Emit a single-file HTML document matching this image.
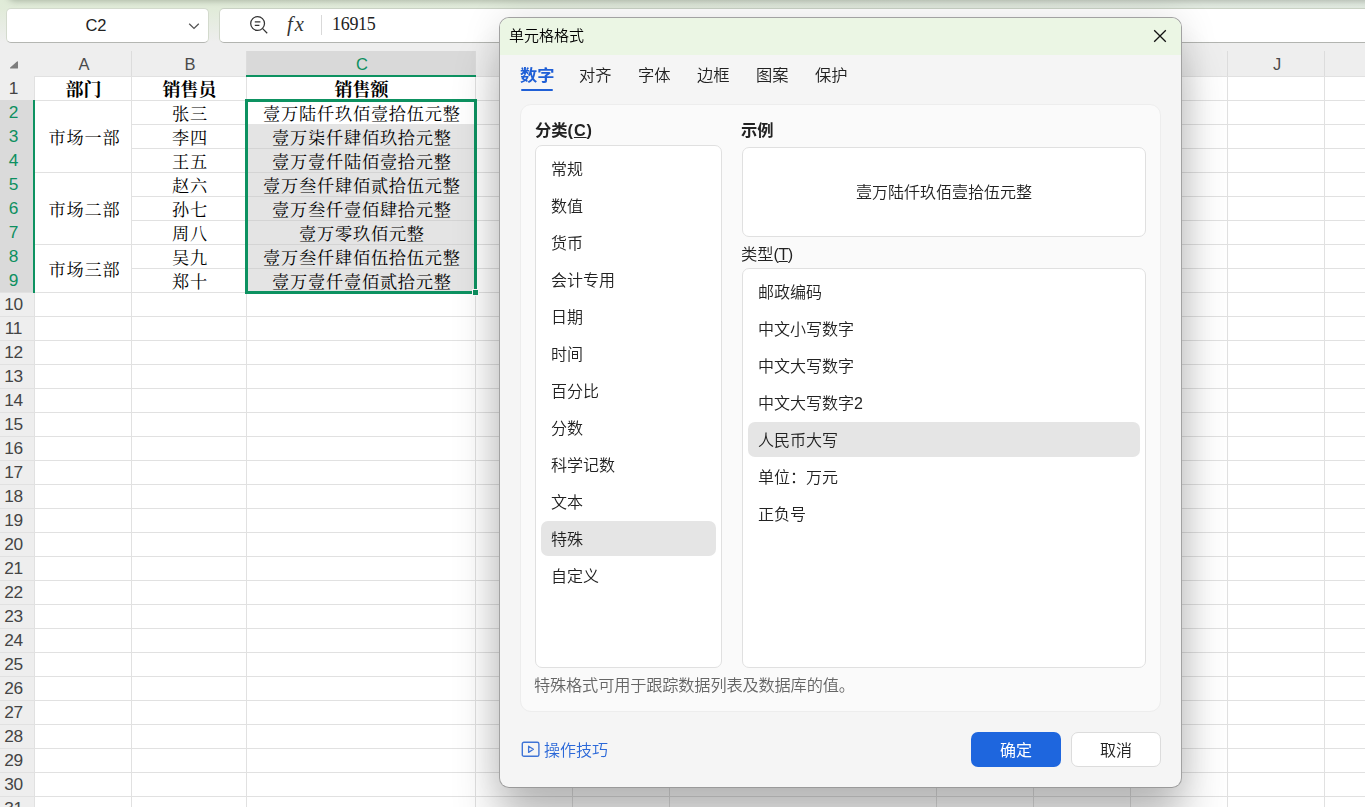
<!DOCTYPE html>
<html lang="zh-CN"><head><meta charset="utf-8"><title>单元格格式</title>
<style>
*{box-sizing:border-box;margin:0;padding:0}
html,body{width:1365px;height:807px;overflow:hidden;background:#fff}
body{position:relative;font-family:"Liberation Sans","Noto Sans CJK SC",sans-serif;color:#222;-webkit-font-smoothing:antialiased}
.abs{position:absolute}
#top{left:0;top:0;width:1365px;height:43px;background:linear-gradient(#e0ebd8 0,#e1ebd9 9px,#eeeeee 42px)}
#top2{left:0;top:0;width:1365px;height:9px;background:linear-gradient(90deg,rgba(224,232,222,0) 0,rgba(224,232,222,0) 15%,rgba(224,232,224,.9) 90%)}
#topshadow{left:9px;top:-12px;width:1400px;height:12px;border-radius:6px;box-shadow:0 0 6px 1px rgba(70,80,66,.36)}
#namebox{left:6px;top:8px;width:203px;height:35px;background:#fff;border:1px solid #d3dacd;border-bottom-color:#b4b6b2;border-radius:5px}
#fbox{left:219px;top:8px;width:1160px;height:35px;background:#fff;border:1px solid #d0d7ca;border-top-color:#c9d1c4;border-bottom-color:#b2b4b0;border-radius:5px}
#nametxt{left:8px;top:9px;width:176px;height:33px;line-height:33px;text-align:center;font-size:16.5px;color:#222}
#fval{left:332px;top:9px;height:31px;line-height:30px;font-family:"Liberation Serif",serif;font-size:18px;letter-spacing:-0.3px;color:#222}
#fsep{left:321px;top:15px;width:1px;height:20px;background:#d9d9d9}
#hdr{left:0;top:43px;width:1365px;height:33px;background:#eeeeee}
#rowhdr{left:0;top:76px;width:34px;height:731px;background:#eeeeee}
.ch{position:absolute;top:51px;height:25px;line-height:26px;text-align:center;padding-left:2px;font-size:16.5px;color:#4a4a4a;border-left:1px solid #dcdcdc}
.rn{z-index:2;position:absolute;left:0;width:27px;height:24px;line-height:25px;text-align:center;font-size:17.3px;letter-spacing:-.3px;color:#444}
.rn.sel{color:#0d8f60}
.hl{position:absolute;left:0;width:1365px;height:1px;background:#e1e1e1}
.vl{position:absolute;top:76px;width:1px;height:731px;background:#e1e1e1}
.cell{position:absolute;text-align:center;padding-left:2px;font-family:"Liberation Serif","Noto Serif CJK SC",serif;font-size:17.2px;letter-spacing:.8px;text-indent:.8px;font-weight:400;color:#000;white-space:nowrap;line-height:24px;height:24px;margin-top:1px}
.cell.b{font-weight:700;font-size:18px;letter-spacing:0;text-indent:0;margin-top:0}
#dlg{will-change:transform;left:499px;top:17px;width:683px;height:771px;background:#f5f5f5;border:1px solid #a2a2a2;border-bottom-color:#9a9a9a;border-radius:10px;box-shadow:0 2px 37px rgba(0,0,0,.125),0 40px 47px rgba(0,0,0,.235);overflow:hidden}
#din{left:0;top:-1px;width:682px;height:771px}
#dtitle{left:-1px;top:0;width:684px;height:38px;background:#ebf6e4}
#dtitletxt{left:9px;top:1px;height:36px;line-height:35px;font-size:15px;font-weight:350;color:#000}
.tab{position:absolute;top:46px;height:24px;line-height:24px;font-size:16.3px;font-weight:350;color:#222;white-space:nowrap}
.tab.on{color:#1f5fd6;font-weight:700;transform:scaleX(1.06);transform-origin:0 50%}
#tabline{left:21px;top:72px;width:32px;height:2px;background:#1f5fd6;border-radius:1px}
#panel{left:20px;top:87px;width:641px;height:608px;background:#fafafa;border:1px solid #ededed;border-radius:11px}
.lbl{position:absolute;font-size:16.3px;font-weight:350;line-height:22px;height:22px;color:#222;white-space:nowrap}
.lbl.b{font-weight:700}
.box{position:absolute;background:#fff;border:1px solid #e0e0e0;border-radius:7px}
.it{position:absolute;left:15px;height:35px;line-height:34px;font-size:16px;font-weight:350;color:#222;white-space:nowrap;margin-top:2px}
.selbg{position:absolute;left:5px;height:35px;background:#e5e5e5;border-radius:7px}
#desc{left:34px;top:657px;font-size:16.2px;letter-spacing:-.15px;font-weight:350;line-height:22px;color:#666;white-space:nowrap}
#tips{left:44px;top:723px;font-size:16px;font-weight:350;line-height:22px;color:#2b68d8;white-space:nowrap}
#ok{left:471px;top:715px;width:90px;height:35px;background:#1e66de;border-radius:7px;color:#fff;text-align:center;font-size:16px;font-weight:400;line-height:37px}
#cancel{left:571px;top:715px;width:90px;height:35px;background:#fff;border:1px solid #dcdcdc;border-radius:7px;color:#222;text-align:center;font-size:16px;font-weight:350;line-height:35px}
</style></head>
<body>
<div class="abs" id="top"></div><div class="abs" id="top2"></div><div class="abs" id="topshadow"></div>
<div class="abs" id="namebox"></div><div class="abs" id="fbox"></div>
<div class="abs" id="nametxt">C2</div>
<svg class="abs" style="left:186px;top:20px" width="16" height="12" viewBox="0 0 16 12"><path d="M3.2 3.8 L8 8.4 L12.8 3.8" fill="none" stroke="#555" stroke-width="1.3"/></svg>
<svg class="abs" style="left:248px;top:14px" width="22" height="22" viewBox="0 0 22 22"><circle cx="9.6" cy="9.5" r="6.9" fill="none" stroke="#333" stroke-width="1.25"/><path d="M14.7 14.6 L19.2 19.2" stroke="#333" stroke-width="1.25" fill="none"/><path d="M6.8 7.8 H12.4 M6.8 11.3 H11.4" stroke="#333" stroke-width="1.2" fill="none"/></svg>
<div class="abs" style="left:287px;top:9px;height:32px;line-height:30px;font-family:'Liberation Serif',serif;font-style:italic;font-size:20.5px;letter-spacing:2px;color:#333">fx</div>
<div class="abs" id="fsep"></div><div class="abs" id="fval">16915</div>
<div class="abs" id="hdr"></div><div class="abs" id="rowhdr"></div>
<div class="abs" style="left:246px;top:51px;width:229px;height:25px;background:#d9d9d9"></div>
<div class="ch" style="left:34px;width:97px;padding-left:3px;border-left:none">A</div>
<div class="ch" style="left:131px;width:115px">B</div>
<div class="ch" style="left:246px;width:229px;color:#0d8f60">C</div>
<div class="ch" style="left:475px;width:97px">D</div>
<div class="ch" style="left:572px;width:97px">E</div>
<div class="ch" style="left:669px;width:267px">F</div>
<div class="ch" style="left:936px;width:97px">G</div>
<div class="ch" style="left:1033px;width:97px">H</div>
<div class="ch" style="left:1130px;width:97px">I</div>
<div class="ch" style="left:1227px;width:97px">J</div>
<div class="ch" style="left:1324px;width:98px">K</div>
<svg class="abs" style="left:8px;top:59px" width="12" height="12" viewBox="0 0 12 12"><path d="M9.4 2.9 V9 H2.6 Z" fill="#7d7d7d" stroke="#7d7d7d" stroke-width="1.2" stroke-linejoin="round"/></svg>
<div class="rn" style="top:76px">1</div>
<div class="rn sel" style="top:100px">2</div>
<div class="rn sel" style="top:124px">3</div>
<div class="rn sel" style="top:148px">4</div>
<div class="rn sel" style="top:172px">5</div>
<div class="rn sel" style="top:196px">6</div>
<div class="rn sel" style="top:220px">7</div>
<div class="rn sel" style="top:244px">8</div>
<div class="rn sel" style="top:268px">9</div>
<div class="rn" style="top:292px">10</div>
<div class="rn" style="top:316px">11</div>
<div class="rn" style="top:340px">12</div>
<div class="rn" style="top:364px">13</div>
<div class="rn" style="top:388px">14</div>
<div class="rn" style="top:412px">15</div>
<div class="rn" style="top:436px">16</div>
<div class="rn" style="top:460px">17</div>
<div class="rn" style="top:484px">18</div>
<div class="rn" style="top:508px">19</div>
<div class="rn" style="top:532px">20</div>
<div class="rn" style="top:556px">21</div>
<div class="rn" style="top:580px">22</div>
<div class="rn" style="top:604px">23</div>
<div class="rn" style="top:628px">24</div>
<div class="rn" style="top:652px">25</div>
<div class="rn" style="top:676px">26</div>
<div class="rn" style="top:700px">27</div>
<div class="rn" style="top:724px">28</div>
<div class="rn" style="top:748px">29</div>
<div class="rn" style="top:772px">30</div>
<div class="rn" style="top:796px">31</div>
<div class="abs" style="left:0;top:100px;width:34px;height:192px;background:#dadada;z-index:1"></div>
<div class="abs" style="left:34px;top:77px;width:1331px;height:730px;background:#fff"></div>
<div class="hl" style="top:76px;left:34px"></div>
<div class="hl" style="top:100px"></div>
<div class="hl" style="top:124px"></div>
<div class="hl" style="top:148px"></div>
<div class="hl" style="top:172px"></div>
<div class="hl" style="top:196px"></div>
<div class="hl" style="top:220px"></div>
<div class="hl" style="top:244px"></div>
<div class="hl" style="top:268px"></div>
<div class="hl" style="top:292px"></div>
<div class="hl" style="top:316px"></div>
<div class="hl" style="top:340px"></div>
<div class="hl" style="top:364px"></div>
<div class="hl" style="top:388px"></div>
<div class="hl" style="top:412px"></div>
<div class="hl" style="top:436px"></div>
<div class="hl" style="top:460px"></div>
<div class="hl" style="top:484px"></div>
<div class="hl" style="top:508px"></div>
<div class="hl" style="top:532px"></div>
<div class="hl" style="top:556px"></div>
<div class="hl" style="top:580px"></div>
<div class="hl" style="top:604px"></div>
<div class="hl" style="top:628px"></div>
<div class="hl" style="top:652px"></div>
<div class="hl" style="top:676px"></div>
<div class="hl" style="top:700px"></div>
<div class="hl" style="top:724px"></div>
<div class="hl" style="top:748px"></div>
<div class="hl" style="top:772px"></div>
<div class="hl" style="top:796px"></div>
<div class="hl" style="top:820px"></div>
<div class="vl" style="left:34px"></div>
<div class="vl" style="left:131px"></div>
<div class="vl" style="left:246px"></div>
<div class="vl" style="left:475px"></div>
<div class="vl" style="left:572px"></div>
<div class="vl" style="left:669px"></div>
<div class="vl" style="left:936px"></div>
<div class="vl" style="left:1033px"></div>
<div class="vl" style="left:1130px"></div>
<div class="vl" style="left:1227px"></div>
<div class="vl" style="left:1324px"></div>
<div class="abs" style="left:35px;top:101px;width:96px;height:71px;background:#fff"></div>
<div class="cell" style="left:35px;width:96px;top:102px;height:72px;line-height:72px">市场一部</div>
<div class="abs" style="left:35px;top:173px;width:96px;height:71px;background:#fff"></div>
<div class="cell" style="left:35px;width:96px;top:174px;height:72px;line-height:72px">市场二部</div>
<div class="abs" style="left:35px;top:245px;width:96px;height:47px;background:#fff"></div>
<div class="cell" style="left:35px;width:96px;top:246px;height:48px;line-height:48px">市场三部</div>
<div class="abs" style="left:247px;top:124px;width:228px;height:168px;background:#e4e4e4"></div>
<div class="abs" style="left:247px;top:148px;width:228px;height:1px;background:#d4d4d4"></div>
<div class="abs" style="left:247px;top:172px;width:228px;height:1px;background:#d4d4d4"></div>
<div class="abs" style="left:247px;top:196px;width:228px;height:1px;background:#d4d4d4"></div>
<div class="abs" style="left:247px;top:220px;width:228px;height:1px;background:#d4d4d4"></div>
<div class="abs" style="left:247px;top:244px;width:228px;height:1px;background:#d4d4d4"></div>
<div class="abs" style="left:247px;top:268px;width:228px;height:1px;background:#d4d4d4"></div>
<div class="cell b" style="left:34px;width:97px;top:78px">部门</div>
<div class="cell b" style="left:131px;width:115px;top:78px">销售员</div>
<div class="cell b" style="left:246px;width:229px;top:78px">销售额</div>
<div class="cell" style="left:131px;width:115px;top:102px">张三</div>
<div class="cell" style="left:246px;width:229px;top:102px">壹万陆仟玖佰壹拾伍元整</div>
<div class="cell" style="left:131px;width:115px;top:126px">李四</div>
<div class="cell" style="left:246px;width:229px;top:126px">壹万柒仟肆佰玖拾元整</div>
<div class="cell" style="left:131px;width:115px;top:150px">王五</div>
<div class="cell" style="left:246px;width:229px;top:150px">壹万壹仟陆佰壹拾元整</div>
<div class="cell" style="left:131px;width:115px;top:174px">赵六</div>
<div class="cell" style="left:246px;width:229px;top:174px">壹万叁仟肆佰贰拾伍元整</div>
<div class="cell" style="left:131px;width:115px;top:198px">孙七</div>
<div class="cell" style="left:246px;width:229px;top:198px">壹万叁仟壹佰肆拾元整</div>
<div class="cell" style="left:131px;width:115px;top:222px">周八</div>
<div class="cell" style="left:246px;width:229px;top:222px">壹万零玖佰元整</div>
<div class="cell" style="left:131px;width:115px;top:246px">吴九</div>
<div class="cell" style="left:246px;width:229px;top:246px">壹万叁仟肆佰伍拾伍元整</div>
<div class="cell" style="left:131px;width:115px;top:270px">郑十</div>
<div class="cell" style="left:246px;width:229px;top:270px">壹万壹仟壹佰贰拾元整</div>
<div class="abs" style="left:246px;top:75px;width:230px;height:2px;background:#0d9261"></div>
<div class="abs" style="left:33px;top:100px;width:2px;height:193px;background:#0d9261;z-index:3"></div>
<div class="abs" style="left:245px;top:99px;width:232px;height:195px;border:3px solid #0d9261"></div>
<div class="abs" style="left:472px;top:289px;width:7px;height:7px;background:#0d9261;border:1px solid #fff"></div>
<div class="abs" id="dlg"><div class="abs" id="din">
<div class="abs" id="dtitle"></div><div class="abs" id="dtitletxt">单元格格式</div>
<svg class="abs" style="left:651px;top:10px" width="18" height="18" viewBox="0 0 18 18"><path d="M3.2 3.2 L14.8 14.8 M14.8 3.2 L3.2 14.8" stroke="#111" stroke-width="1.3" fill="none"/></svg>
<div class="tab on" style="left:20px">数字</div>
<div class="tab" style="left:79px">对齐</div>
<div class="tab" style="left:138px">字体</div>
<div class="tab" style="left:197px">边框</div>
<div class="tab" style="left:256px">图案</div>
<div class="tab" style="left:315px">保护</div>
<div class="abs" id="tabline"></div>
<div class="abs" id="panel"></div>
<div class="lbl b" style="left:35px;top:102px">分类<span style="letter-spacing:.9px">(<span style="text-decoration:underline">C</span>)</span></div>
<div class="lbl b" style="left:241px;top:102px">示例</div>
<div class="lbl" style="left:241px;top:226px">类型<span style="letter-spacing:-.6px">(<span style="text-decoration:underline">T</span>)</span></div>
<div class="box" style="left:35px;top:128px;width:187px;height:523px">
<div class="it" style="top:5px">常规</div>
<div class="it" style="top:42px">数值</div>
<div class="it" style="top:79px">货币</div>
<div class="it" style="top:116px">会计专用</div>
<div class="it" style="top:153px">日期</div>
<div class="it" style="top:190px">时间</div>
<div class="it" style="top:227px">百分比</div>
<div class="it" style="top:264px">分数</div>
<div class="it" style="top:301px">科学记数</div>
<div class="it" style="top:338px">文本</div>
<div class="selbg" style="top:375px;width:175px"></div>
<div class="it" style="top:375px">特殊</div>
<div class="it" style="top:412px">自定义</div>
</div>
<div class="box" style="left:242px;top:130px;width:404px;height:90px;text-align:center;line-height:90px;font-size:16px;font-weight:350;color:#222">壹万陆仟玖佰壹拾伍元整</div>
<div class="box" style="left:242px;top:251px;width:404px;height:400px">
<div class="it" style="top:5px">邮政编码</div>
<div class="it" style="top:42px">中文小写数字</div>
<div class="it" style="top:79px">中文大写数字</div>
<div class="it" style="top:116px">中文大写数字2</div>
<div class="selbg" style="top:153px;width:392px"></div>
<div class="it" style="top:153px">人民币大写</div>
<div class="it" style="top:190px">单位：万元</div>
<div class="it" style="top:227px">正负号</div>
</div>
<div class="abs" id="desc">特殊格式可用于跟踪数据列表及数据库的值。</div>
<svg class="abs" style="left:20.5px;top:724px" width="20" height="18" viewBox="0 0 20 18"><rect x="1.3" y="1.3" width="16.6" height="14" rx="1.6" fill="none" stroke="#3f74d6" stroke-width="1.4"/><path d="M7.6 5.2 L12.4 8.3 L7.6 11.4 Z" fill="none" stroke="#3f74d6" stroke-width="1.3" stroke-linejoin="round"/></svg>
<div class="abs" id="tips">操作技巧</div>
<div class="abs" id="ok">确定</div><div class="abs" id="cancel">取消</div>
</div></div>
</body></html>
